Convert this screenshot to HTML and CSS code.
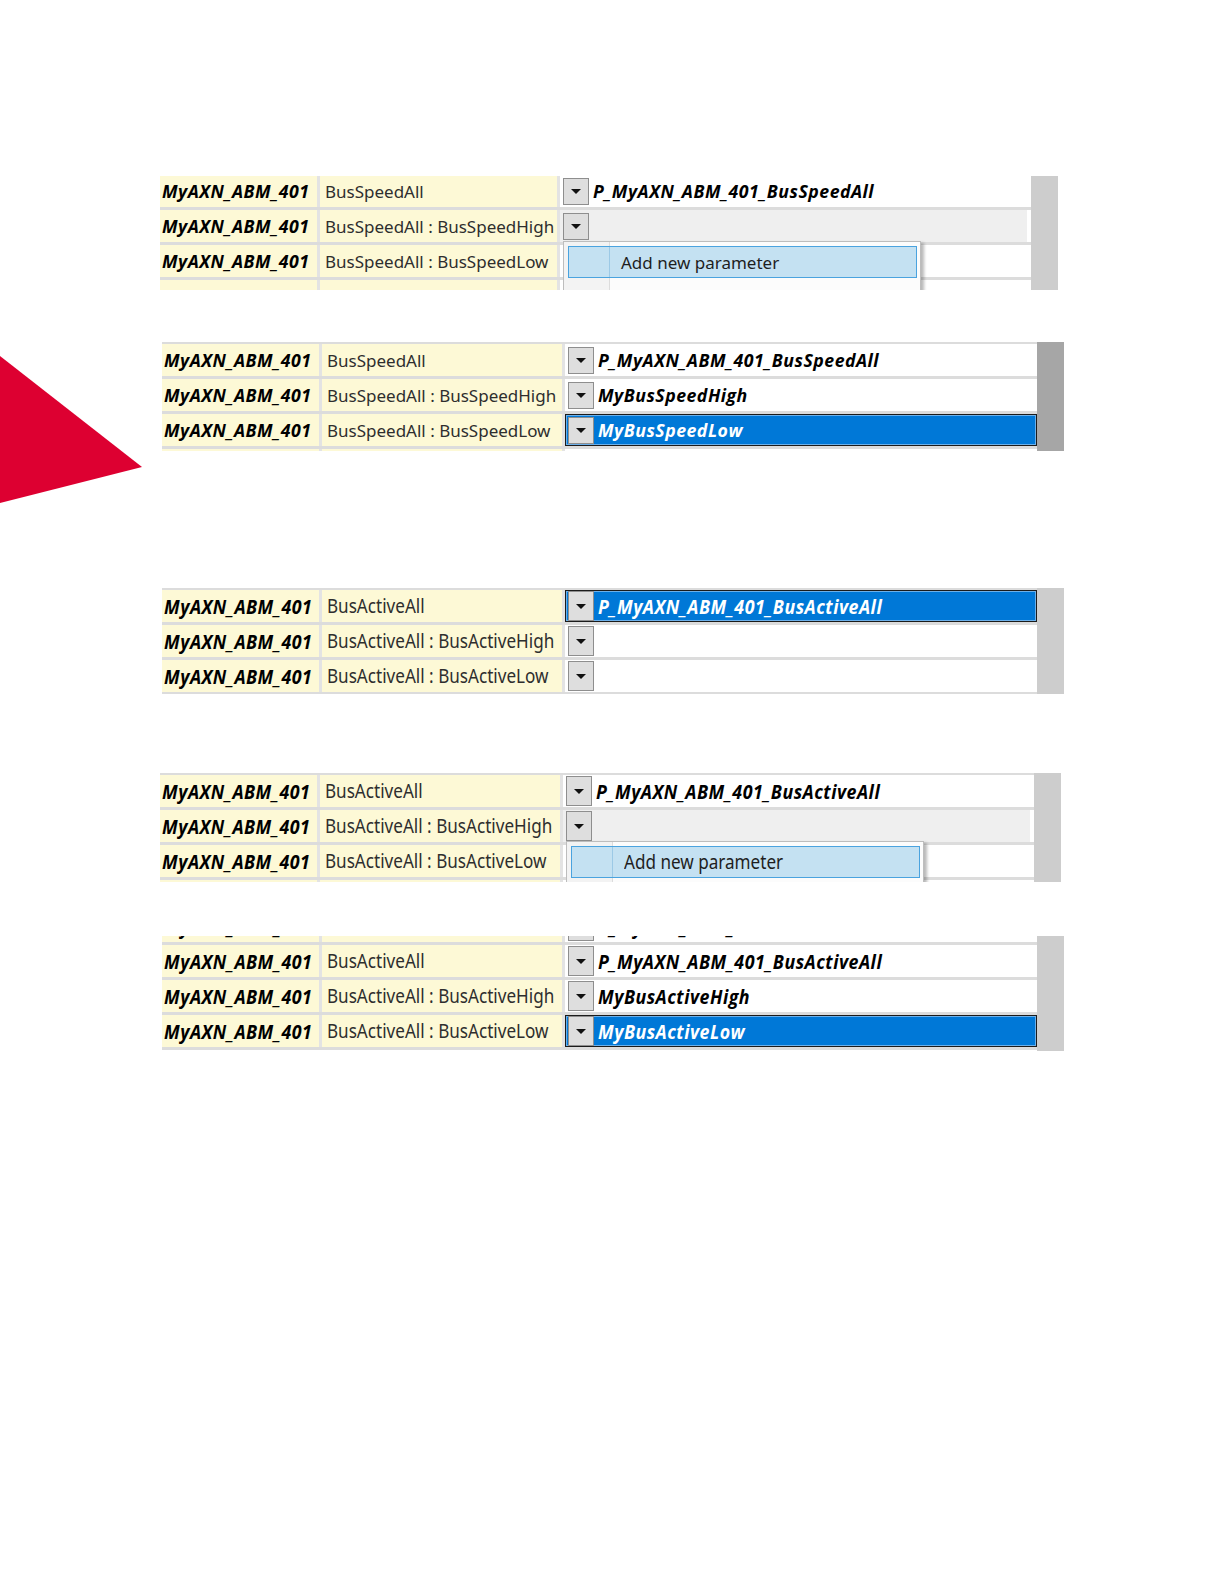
FILE: index.html
```html
<!DOCTYPE html>
<html lang="en">
<head>
    <meta charset="UTF-8">
    <title>Parameter mapping</title>
    <link rel="stylesheet" href="styles.css">
</head>
<body>
<div class="page">
    <svg class="arrow" width="143" height="148" viewBox="0 0 143 148">
        <polygon points="0,0 142,111 0,147" fill="#dd0031"/>
    </svg>

    <!-- speed: picking a parameter -->
    <div class="sheet sheet--1">
        <div class="rows rows--top">
            <div class="row">
                <div class="cell c-dev"><span class="txt">MyAXN_ABM_401</span></div>
                <div class="cell c-name"><span class="txt">BusSpeedAll</span></div>
                <div class="cell c-val"><span class="drop"></span><span class="txt">P_MyAXN_ABM_401_BusSpeedAll</span></div>
            </div>
            <div class="row">
                <div class="cell c-dev"><span class="txt">MyAXN_ABM_401</span></div>
                <div class="cell c-name"><span class="txt">BusSpeedAll : BusSpeedHigh</span></div>
                <div class="cell c-val is-edit">
                    <span class="drop"></span>
                    <div class="menu">
                        <div class="menu__item"><span class="menu__label">Add new parameter</span></div>
                    </div>
                </div>
            </div>
            <div class="row">
                <div class="cell c-dev"><span class="txt">MyAXN_ABM_401</span></div>
                <div class="cell c-name"><span class="txt">BusSpeedAll : BusSpeedLow</span></div>
                <div class="cell c-val"></div>
            </div>
            <div class="row">
                <div class="cell c-dev"></div>
                <div class="cell c-name"></div>
                <div class="cell c-val"></div>
            </div>
        </div>
        <div class="scroll"></div>
    </div>

    <!-- speed: done -->
    <div class="sheet sheet--2">
        <div class="rows">
            <div class="row">
                <div class="cell c-dev"><span class="txt">MyAXN_ABM_401</span></div>
                <div class="cell c-name"><span class="txt">BusSpeedAll</span></div>
                <div class="cell c-val"><span class="drop"></span><span class="txt">P_MyAXN_ABM_401_BusSpeedAll</span></div>
            </div>
            <div class="row">
                <div class="cell c-dev"><span class="txt">MyAXN_ABM_401</span></div>
                <div class="cell c-name"><span class="txt">BusSpeedAll : BusSpeedHigh</span></div>
                <div class="cell c-val"><span class="drop"></span><span class="txt">MyBusSpeedHigh</span></div>
            </div>
            <div class="row">
                <div class="cell c-dev"><span class="txt">MyAXN_ABM_401</span></div>
                <div class="cell c-name"><span class="txt">BusSpeedAll : BusSpeedLow</span></div>
                <div class="cell c-val is-sel"><span class="drop"></span><span class="txt">MyBusSpeedLow</span></div>
            </div>
            <div class="row">
                <div class="cell c-dev"></div>
                <div class="cell c-name"></div>
                <div class="cell c-val"></div>
            </div>
        </div>
        <div class="scroll scroll--dark"></div>
    </div>

    <!-- active: empty -->
    <div class="sheet sheet--3 sheet--tall">
        <div class="rows">
            <div class="row">
                <div class="cell c-dev"><span class="txt">MyAXN_ABM_401</span></div>
                <div class="cell c-name"><span class="txt">BusActiveAll</span></div>
                <div class="cell c-val is-sel"><span class="drop"></span><span class="txt">P_MyAXN_ABM_401_BusActiveAll</span></div>
            </div>
            <div class="row">
                <div class="cell c-dev"><span class="txt">MyAXN_ABM_401</span></div>
                <div class="cell c-name"><span class="txt">BusActiveAll : BusActiveHigh</span></div>
                <div class="cell c-val"><span class="drop"></span></div>
            </div>
            <div class="row">
                <div class="cell c-dev"><span class="txt">MyAXN_ABM_401</span></div>
                <div class="cell c-name"><span class="txt">BusActiveAll : BusActiveLow</span></div>
                <div class="cell c-val"><span class="drop"></span></div>
            </div>
        </div>
        <div class="scroll"></div>
    </div>

    <!-- active: picking a parameter -->
    <div class="sheet sheet--4 sheet--tall">
        <div class="rows">
            <div class="row">
                <div class="cell c-dev"><span class="txt">MyAXN_ABM_401</span></div>
                <div class="cell c-name"><span class="txt">BusActiveAll</span></div>
                <div class="cell c-val"><span class="drop"></span><span class="txt">P_MyAXN_ABM_401_BusActiveAll</span></div>
            </div>
            <div class="row">
                <div class="cell c-dev"><span class="txt">MyAXN_ABM_401</span></div>
                <div class="cell c-name"><span class="txt">BusActiveAll : BusActiveHigh</span></div>
                <div class="cell c-val is-edit">
                    <span class="drop"></span>
                    <div class="menu">
                        <div class="menu__item"><span class="menu__label"><span class="txt">Add new parameter</span></span></div>
                    </div>
                </div>
            </div>
            <div class="row">
                <div class="cell c-dev"><span class="txt">MyAXN_ABM_401</span></div>
                <div class="cell c-name"><span class="txt">BusActiveAll : BusActiveLow</span></div>
                <div class="cell c-val"></div>
            </div>
            <div class="row">
                <div class="cell c-dev"></div>
                <div class="cell c-name"></div>
                <div class="cell c-val"></div>
            </div>
        </div>
        <div class="scroll"></div>
    </div>

    <!-- active: done -->
    <div class="sheet sheet--5 sheet--tall">
        <div class="rows rows--cut">
            <div class="row">
                <div class="cell c-dev"><span class="txt">MyAXN_ABM_401</span></div>
                <div class="cell c-name"><span class="txt">BusActiveAll : BusActiveLow</span></div>
                <div class="cell c-val"><span class="drop"></span><span class="txt">P_MyAXN_ABM_401</span></div>
            </div>
            <div class="row">
                <div class="cell c-dev"><span class="txt">MyAXN_ABM_401</span></div>
                <div class="cell c-name"><span class="txt">BusActiveAll</span></div>
                <div class="cell c-val"><span class="drop"></span><span class="txt">P_MyAXN_ABM_401_BusActiveAll</span></div>
            </div>
            <div class="row">
                <div class="cell c-dev"><span class="txt">MyAXN_ABM_401</span></div>
                <div class="cell c-name"><span class="txt">BusActiveAll : BusActiveHigh</span></div>
                <div class="cell c-val"><span class="drop"></span><span class="txt">MyBusActiveHigh</span></div>
            </div>
            <div class="row">
                <div class="cell c-dev"><span class="txt">MyAXN_ABM_401</span></div>
                <div class="cell c-name"><span class="txt">BusActiveAll : BusActiveLow</span></div>
                <div class="cell c-val is-sel"><span class="drop"></span><span class="txt">MyBusActiveLow</span></div>
            </div>
        </div>
        <div class="scroll"></div>
    </div>
</div>
</body>
</html>
```

FILE: styles.css
```css
body {
    margin: 0;
    background: #fff;
    font-family: "Noto Sans", "Open Sans", sans-serif;
    font-size: 17px;
    color: #111;
}
.page {
    position: relative;
    padding-top: 176px;
    min-height: 1400px;
}
.arrow {
    position: absolute;
    left: 0;
    top: 356px;
}

/* one clipped grid screenshot */
.sheet {
    display: flex;
    overflow: hidden;
    margin-left: 162px;
    width: 902px;
}
.sheet--1 {
    margin-left: 160px;
    width: 898px;
    height: 114px;
}
.sheet--2 {
    margin-top: 52px;
    height: 109px;
}
.sheet--3 {
    margin-top: 137px;
    height: 106px;
}
.sheet--4 {
    margin-top: 79px;
    margin-left: 160px;
    width: 901px;
    height: 109px;
}
.sheet--5 {
    margin-top: 54px;
    height: 115px;
}

.rows {
    flex: 1;
    min-width: 0;
    border-top: 2px solid #dcdcdc;
}
.rows--top .row:first-child {
    margin-top: -3px;
}
.rows--cut {
    border-top: none;
}
.rows--cut .row:first-child {
    margin-top: -26px;
}
.scroll {
    flex: none;
    width: 27px;
    background: #cdcdcd;
}
.scroll--dark {
    background: #a6a6a6;
}

.row {
    display: grid;
    grid-template-columns: 160px 243px 1fr;
    height: 35px;
    box-sizing: border-box;
    border-bottom: 3px solid #dcdcdc;
}
.sheet--1 .row {
    grid-template-columns: 160px 240px 1fr;
}
.cell {
    display: flex;
    align-items: center;
    white-space: nowrap;
    min-width: 0;
}
.c-dev {
    background: #fdf9d6;
    border-right: 3px solid #e3e3e3;
    padding-left: 2px;
    overflow: hidden;
}
.c-name {
    background: #fdf9d6;
    border-right: 3px solid #e3e3e3;
    padding-left: 5px;
    color: #2e2e2e;
    overflow: hidden;
}
.c-val {
    position: relative;
    padding-left: 3px;
    gap: 4px;
    background: #fff;
}
.c-dev, .c-val {
    font-family: "Open Sans", "Noto Sans", sans-serif;
    font-size: 17.7px;
    font-weight: 700;
    font-style: italic;
    letter-spacing: 0.5px;
    color: #000;
}
.c-val.is-edit {
    background: #efefef;
    border-right: 4px solid #fff;
}
.c-val.is-sel {
    background: #0078d7;
    color: #fff;
    border: 1px solid #1b1b1b;
    box-shadow: inset 0 0 0 1px #6cb0ea;
    padding-left: 2px;
}

.drop {
    flex: none;
    width: 26px;
    height: 27px;
    box-sizing: border-box;
    background: #dedede;
    border: 1px solid #8e8e8e;
    display: flex;
    align-items: center;
    justify-content: center;
}
.drop::after {
    content: "";
    border-left: 5px solid transparent;
    border-right: 5px solid transparent;
    border-top: 5px solid #111;
}

/* dropdown list */
.menu {
    position: absolute;
    z-index: 2;
    left: 3px;
    top: calc(100% - 1px);
    width: 358px;
    height: 70px;
    box-sizing: border-box;
    padding: 4px 3px 4px 4px;
    border: 1px solid #bdbdbd;
    background: linear-gradient(to right, #f3f3f3 45px, #dcdcdc 45px, #dcdcdc 46px, #fcfcfc 46px);
    box-shadow: 3px 2px 3px rgba(0, 0, 0, 0.28);
}
.menu__item {
    display: flex;
    height: 32px;
    box-sizing: border-box;
    border: 1px solid #4aa3df;
    background: #c4e1f2;
}
.menu__label {
    display: flex;
    align-items: center;
    margin-left: 40px;
    padding-left: 11px;
    border-left: 1px solid #9cc9e6;
    font-family: "Noto Sans", "Open Sans", sans-serif;
    font-size: 17px;
    font-weight: 400;
    font-style: normal;
    letter-spacing: 0;
    color: #1e1e1e;
}

/* the lower three shots are stretched: taller, narrower letters */
.sheet--tall .drop {
    height: 30px;
}
.sheet--tall .txt {
    display: inline-block;
    font-size: 19px;
    transform: scaleX(0.9);
    transform-origin: left center;
}
.sheet--tall .c-dev .txt,
.sheet--tall .c-val .txt {
    font-size: 19.8px;
    letter-spacing: 0.55px;
}
.sheet--tall .menu .txt {
    font-size: 19px;
    letter-spacing: 0;
}
```
